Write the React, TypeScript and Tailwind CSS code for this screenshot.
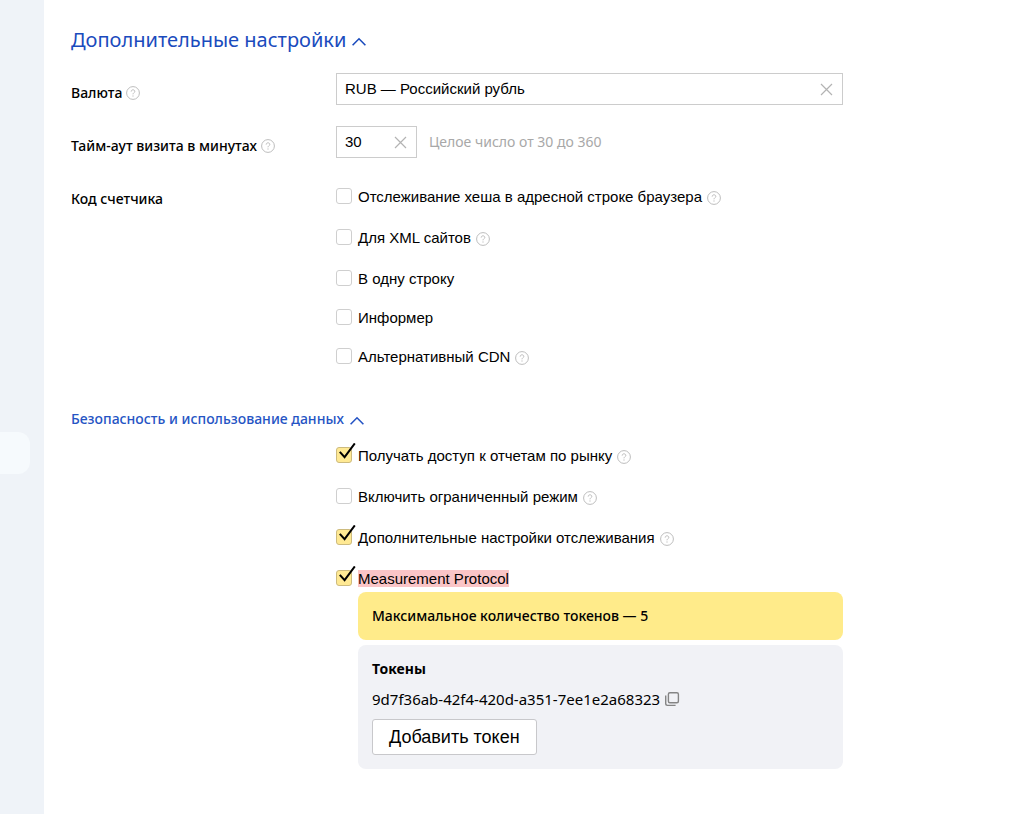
import React, { useState } from 'react';

interface Option {
  id: string;
  label: string;
  hint?: boolean;
  checked?: boolean;
  marked?: boolean;
}

const codeOptions: Option[] = [
  { id: 'hash', label: 'Отслеживание хеша в адресной строке браузера', hint: true },
  { id: 'xml', label: 'Для XML сайтов', hint: true },
  { id: 'oneline', label: 'В одну строку' },
  { id: 'informer', label: 'Информер' },
  { id: 'cdn', label: 'Альтернативный CDN', hint: true },
];

const securityOptions: Option[] = [
  { id: 'market', label: 'Получать доступ к отчетам по рынку', hint: true, checked: true },
  { id: 'limited', label: 'Включить ограниченный режим', hint: true },
  { id: 'tracking', label: 'Дополнительные настройки отслеживания', hint: true, checked: true },
  { id: 'mp', label: 'Measurement Protocol', checked: true, marked: true },
];

const HelpIcon = () => (
  <button type="button" aria-label="Подсказка" className="shrink-0 text-[#bdbdbd]">
    <svg width="14" height="14" viewBox="0 0 14 14" fill="none" stroke="currentColor" className="block">
      <circle cx="7" cy="7" r="6.4" />
      <path d="M5.2 5.6c0-1.1.8-1.8 1.8-1.8s1.8.7 1.8 1.6c0 1.3-1.8 1.4-1.8 2.9" />
      <path d="M7 9.4v1.2" strokeWidth="1.2" />
    </svg>
  </button>
);

const ChevronUp = () => (
  <svg width="14" height="9" viewBox="0 0 14 9" fill="none" stroke="currentColor" strokeWidth="1.6" className="mt-0.5 shrink-0">
    <path d="M.6 8.2 7 1.8l6.4 6.4" />
  </svg>
);

const ClearButton = ({ onClick }: { onClick: () => void }) => (
  <button type="button" aria-label="Очистить" onClick={onClick} className="shrink-0 px-[9px] text-[#b3b3b3]">
    <svg width="13" height="13" viewBox="0 0 13 13" fill="none" stroke="currentColor" strokeWidth="1.2" className="block">
      <path d="m1 1 11 11M12 1 1 12" />
    </svg>
  </button>
);

const CheckRow = ({ option }: { option: Option }) => {
  const [checked, setChecked] = useState(!!option.checked);

  return (
    <div className={`flex items-start ${option.hint ? 'h-[21px]' : 'h-[19px]'}`}>
      <span className="relative mt-px mr-1.5 size-4 shrink-0">
        <input
          id={option.id}
          type="checkbox"
          checked={checked}
          onChange={(e) => setChecked(e.target.checked)}
          className="block size-4 appearance-none rounded-[3px] border border-[#cfcfcf] bg-white checked:border-[#cdbb7e] checked:bg-[#ffe993]"
        />
        {checked && (
          <svg
            width="20"
            height="20"
            viewBox="0 0 20 20"
            fill="none"
            stroke="black"
            strokeWidth="2"
            className="pointer-events-none absolute bottom-0 left-0 max-w-none"
          >
            <path d="m3.8 8.8 4.8 5.4L18.8.4" />
          </svg>
        )}
      </span>
      <label htmlFor={option.id} className="leading-5">
        <span className={option.marked ? 'bg-[#fac5c7]' : ''}>{option.label}</span>
      </label>
      {option.hint && (
        <span className="mt-1 ml-[5px] flex">
          <HelpIcon />
        </span>
      )}
    </div>
  );
};

const FieldLabel = ({ htmlFor, hint, children }: { htmlFor?: string; hint?: boolean; children: React.ReactNode }) => (
  <div className="mt-2.5 flex w-[265px] shrink-0 items-center gap-1 font-['Noto_Sans',sans-serif] text-[14px] font-medium leading-5">
    {htmlFor ? <label htmlFor={htmlFor}>{children}</label> : <span>{children}</span>}
    {hint && <HelpIcon />}
  </div>
);

const App: React.FC = () => {
  const [currency, setCurrency] = useState('RUB — Российский рубль');
  const [timeout, setTimeoutValue] = useState('30');

  return (
    <div className="flex min-h-screen bg-white font-['Liberation_Sans',Arial,sans-serif] text-[15px] text-black">
      <aside className="w-11 shrink-0 bg-[#eff3f8] pt-[432px]">
        <div className="h-[42px] w-[30px] rounded-r-xl bg-[#f6fafd]" />
      </aside>

      <main className="min-w-0 flex-1 pt-6 pr-6 pb-11 pl-[27px]">
        <form className="max-w-[772px]" onSubmit={(e) => e.preventDefault()}>
          <h2 className="font-['Noto_Sans',sans-serif] text-[20px] leading-8 text-[#1a4bbd]">
            <button type="button" className="flex items-center gap-1.5">
              Дополнительные настройки
              <ChevronUp />
            </button>
          </h2>

          <div className="mt-[17px] space-y-[21px]">
            <div className="flex items-start">
              <FieldLabel htmlFor="currency" hint>Валюта</FieldLabel>
              <div className="flex h-8 min-w-0 flex-1 items-center border border-[#cccccc]">
                <input
                  id="currency"
                  type="text"
                  value={currency}
                  onChange={(e) => setCurrency(e.target.value)}
                  className="min-w-0 flex-1 pl-2 outline-none"
                />
                <ClearButton onClick={() => setCurrency('')} />
              </div>
            </div>

            <div className="flex items-start">
              <FieldLabel htmlFor="timeout" hint>Тайм-аут визита в минутах</FieldLabel>
              <div className="flex h-8 w-[81px] items-center border border-[#cccccc]">
                <input
                  id="timeout"
                  type="text"
                  value={timeout}
                  onChange={(e) => setTimeoutValue(e.target.value)}
                  className="min-w-0 flex-1 pl-2 outline-none"
                />
                <ClearButton onClick={() => setTimeoutValue('')} />
              </div>
              <span className="ml-3 font-['Noto_Sans',sans-serif] text-[14px] leading-8 text-[#a8a8a8]">
                Целое число от 30 до 360
              </span>
            </div>

            <div className="flex items-start">
              <FieldLabel>Код счетчика</FieldLabel>
              <div className="min-w-0 flex-1 space-y-5 pt-2">
                {codeOptions.map((option) => (
                  <CheckRow key={option.id} option={option} />
                ))}
              </div>
            </div>
          </div>

          <h3 className="mt-[39px] font-['Noto_Sans',sans-serif] text-[14px] font-medium leading-6 text-[#2554c4]">
            <button type="button" className="flex items-center gap-1.5">
              Безопасность и использование данных
              <ChevronUp />
            </button>
          </h3>

          <div className="mt-[15px] ml-[265px]">
            <div className="space-y-5">
              {securityOptions.map((option) => (
                <CheckRow key={option.id} option={option} />
              ))}
            </div>

            <div className="mt-1 ml-[22px] space-y-[5px] font-['Noto_Sans',sans-serif] text-[14px]">
              <p className="rounded-lg bg-[#ffeb8a] px-3.5 py-3 font-medium leading-6">Максимальное количество токенов — 5</p>
              <section className="rounded-lg bg-[#f1f2f6] px-3.5 pt-3 pb-3.5">
                <h4 className="font-bold leading-6">Токены</h4>
                <div className="mt-1.5 flex items-center gap-1 text-[15px] leading-6">
                  <span>9d7f36ab-42f4-420d-a351-7ee1e2a68323</span>
                  <button type="button" aria-label="Скопировать" className="text-[#858585]">
                    <svg width="16" height="16" viewBox="0 0 16 16" fill="none" stroke="currentColor" strokeWidth="1.4" className="block">
                      <rect x="4.4" y="1.7" width="10" height="10" rx="1.5" />
                      <path d="M1.7 4.5v8.1c0 1.1.7 1.8 1.8 1.8h8.1" />
                    </svg>
                  </button>
                </div>
                <button
                  type="button"
                  className="mt-2 h-9 rounded-[3px] border border-[#c8c8cb] bg-white px-4 font-['Liberation_Sans',Arial,sans-serif] text-[18px]"
                >
                  Добавить токен
                </button>
              </section>
            </div>
          </div>
        </form>
      </main>
    </div>
  );
};

export default App;
